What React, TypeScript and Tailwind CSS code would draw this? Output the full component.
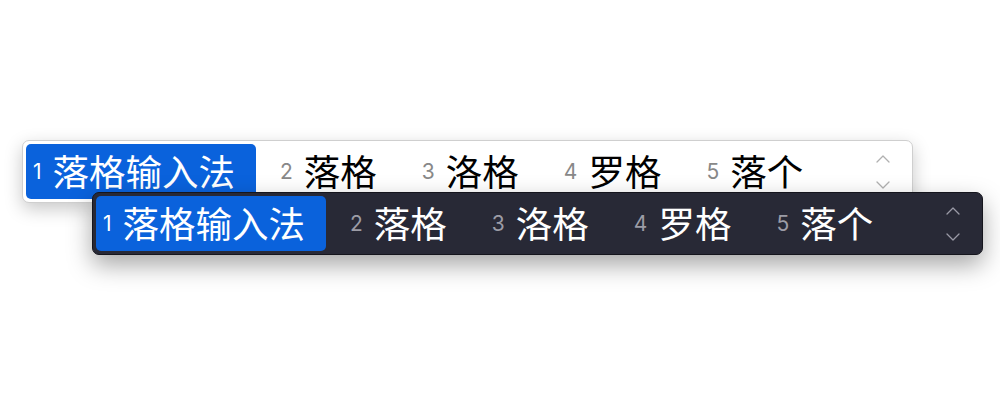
import { ChevronUp, ChevronDown } from 'lucide-react';

const candidates = ['落格输入法', '落格', '洛格', '罗格', '落个'];

interface CandidateBarProps {
  dark?: boolean;
}

function CandidateBar({ dark = false }: CandidateBarProps) {
  const panel = dark
    ? 'border-[#15151d] bg-[#282936] shadow-[0_10px_24px_rgba(0,0,0,0.35)]'
    : 'border-[#cfcfcf] bg-white shadow-[0_6px_18px_rgba(0,0,0,0.22)]';
  const numberColor = dark ? 'text-[#9c9ca6]' : 'text-[#888888]';
  const textColor = dark ? 'text-white' : 'text-black';
  const arrowColor = dark ? 'text-[#9a9aa6]' : 'text-[#b0b0b0]';

  return (
    <div className={`flex h-[63px] w-[891px] items-center rounded-[7px] border p-[3px] ${panel}`}>
      <div className="flex h-full items-center gap-[17px]">
        {candidates.map((word, index) => {
          const active = index === 0;
          return (
            <div
              key={word}
              className={`flex h-full items-center gap-[11px] rounded-[5px] pl-[7px] pr-[21px] ${active ? 'bg-[#0a62dc]' : ''}`}
            >
              <span
                className={`text-[21px] leading-none ${active ? 'text-white' : numberColor}`}
                style={{ fontFamily: 'Inter, "Noto Sans", sans-serif' }}
              >
                {index + 1}
              </span>
              <span
                className={`text-[36.5px] leading-none ${active ? 'text-white' : textColor}`}
                style={{ fontFamily: '"Noto Sans CJK SC", sans-serif' }}
              >
                {word}
              </span>
            </div>
          );
        })}
      </div>
      <div className={`ml-auto mr-[14px] flex flex-col items-center gap-[2px] ${arrowColor}`}>
        <ChevronUp size={24} strokeWidth={1.3} />
        <ChevronDown size={24} strokeWidth={1.3} />
      </div>
    </div>
  );
}

export default function App() {
  return (
    <div className="h-[400px] w-[1000px] overflow-hidden bg-white pl-[22px] pt-[140px]">
      <CandidateBar />
      <div className="relative ml-[70px] mt-[-11px]">
        <CandidateBar dark />
      </div>
    </div>
  );
}
